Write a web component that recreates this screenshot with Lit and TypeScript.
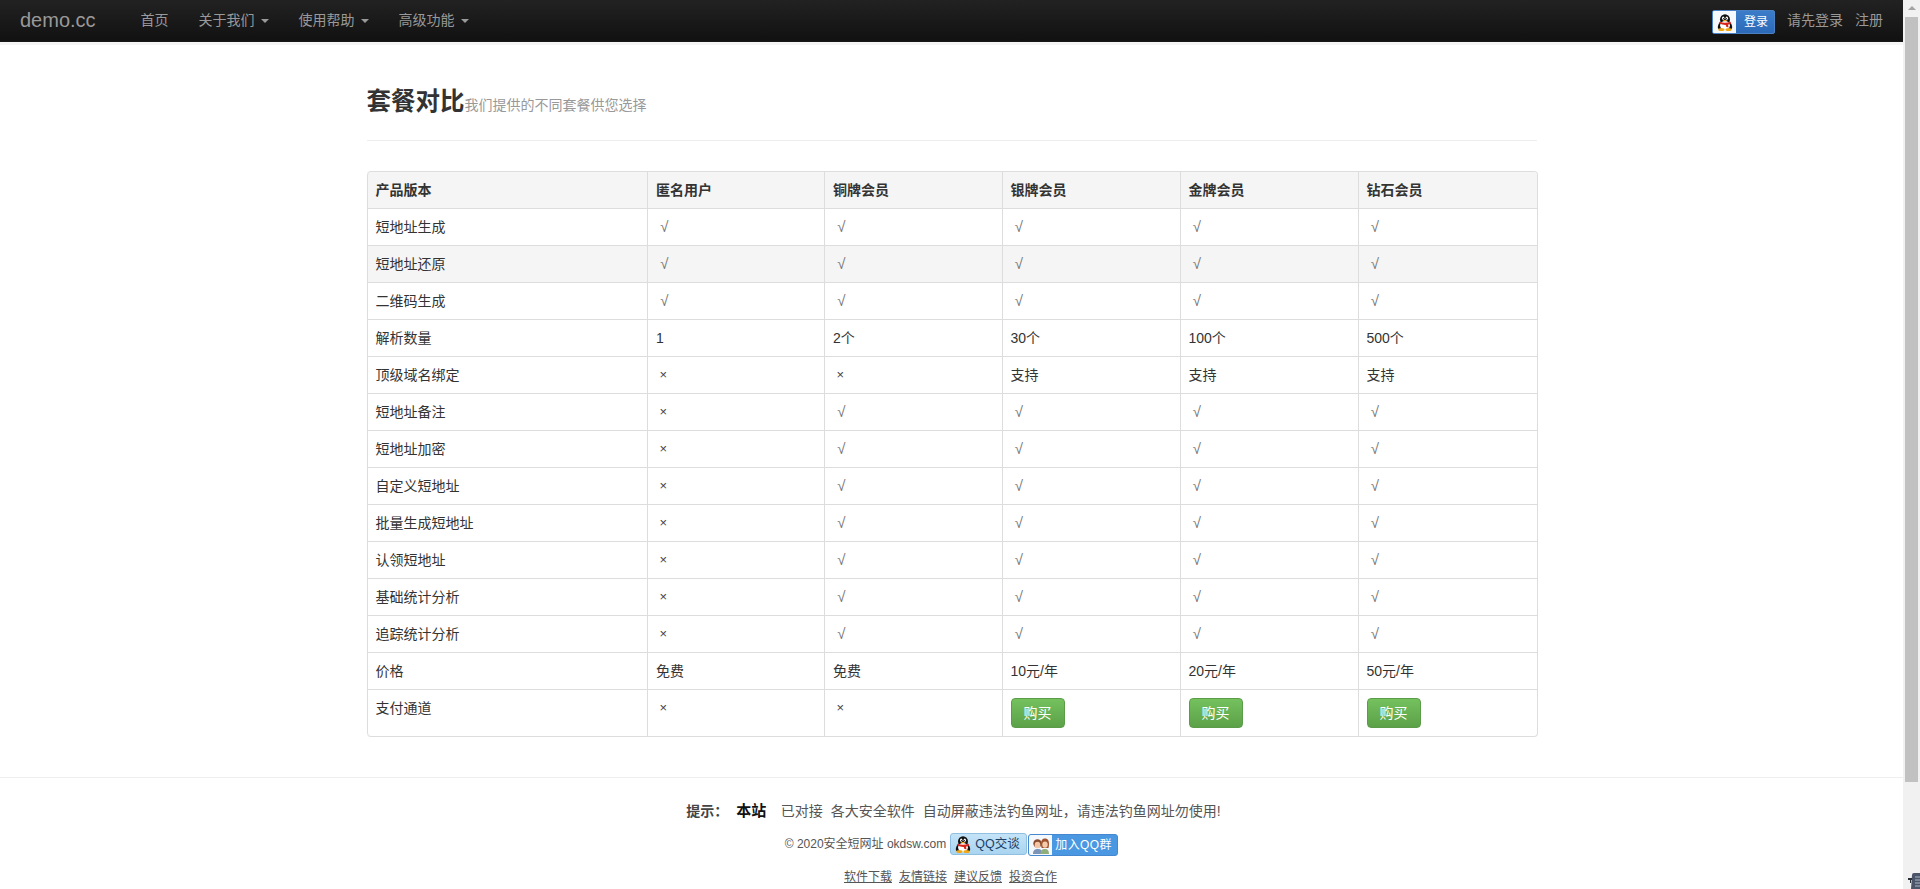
import { LitElement, html, css, svg } from "lit";
import { customElement } from "lit/decorators.js";

const Y = "\u00a0√";
const N = "\u00a0×";
const rows: { cells: string[]; stripe?: boolean }[] = [
  { cells: ["短地址生成", Y, Y, Y, Y, Y] },
  { cells: ["短地址还原", Y, Y, Y, Y, Y], stripe: true },
  { cells: ["二维码生成", Y, Y, Y, Y, Y] },
  { cells: ["解析数量", "1", "2个", "30个", "100个", "500个"] },
  { cells: ["顶级域名绑定", N, N, "支持", "支持", "支持"] },
  { cells: ["短地址备注", N, Y, Y, Y, Y] },
  { cells: ["短地址加密", N, Y, Y, Y, Y] },
  { cells: ["自定义短地址", N, Y, Y, Y, Y] },
  { cells: ["批量生成短地址", N, Y, Y, Y, Y] },
  { cells: ["认领短地址", N, Y, Y, Y, Y] },
  { cells: ["基础统计分析", N, Y, Y, Y, Y] },
  { cells: ["追踪统计分析", N, Y, Y, Y, Y] },
  { cells: ["价格", "免费", "免费", "10元/年", "20元/年", "50元/年"] },
];
const heads = ["产品版本", "匿名用户", "铜牌会员", "银牌会员", "金牌会员", "钻石会员"];
const widths = [280.5, 177, 177.5, 178, 178, 179];

const penguin = (w: number, h: number) => svg`<svg class="peng" width=${w} height=${h} viewBox="0 0 16 17">
  <ellipse cx="8" cy="5.6" rx="5" ry="5.4" fill="#111"/>
  <path d="M3 8 C0.8 10.5 0.2 13.5 1.4 15 L14.6 15 C15.8 13.5 15.2 10.5 13 8 Z" fill="#111"/>
  <ellipse cx="8" cy="11.6" rx="4.9" ry="4.6" fill="#fff"/>
  <ellipse cx="6.2" cy="4.2" rx="1.2" ry="1.6" fill="#fff"/>
  <ellipse cx="9.8" cy="4.2" rx="1.2" ry="1.6" fill="#fff"/>
  <circle cx="6.5" cy="4.5" r=".6" fill="#111"/><circle cx="9.5" cy="4.5" r=".6" fill="#111"/>
  <path d="M5.4 6 H10.6 L8 7.6 Z" fill="#f0a818"/>
  <path d="M2.6 7.8 C6 9.2 10 9.2 13.4 7.8 L14 9.6 C12.6 10.4 11.8 10.6 11 10.7 L11.6 13.6 L9.2 12.8 L8.8 10.9 C7 11 4.6 10.7 2.2 9.6 Z" fill="#d8261c"/>
  <ellipse cx="4.4" cy="15.4" rx="3.1" ry="1.5" fill="#f0a818"/>
  <ellipse cx="11.6" cy="15.4" rx="3.1" ry="1.5" fill="#f0a818"/>
</svg>`;

const people = svg`<svg width="18" height="19" viewBox="0 0 18 19">
  <path d="M1 18 C1 14 3 13 6 13 C9 13 10.5 14.5 10.5 18 Z" fill="#7c93b8"/>
  <path d="M8.5 18 C8.5 14 10.5 13 13 13 C15.6 13 17 14.5 17 18 Z" fill="#8fae7c"/>
  <circle cx="5.5" cy="7.5" r="4.2" fill="#8a4a2c"/>
  <ellipse cx="5.5" cy="9" rx="2.8" ry="3.2" fill="#f2c6a4"/>
  <path d="M13 2.5 C9.8 2.5 9 5 9 8 C9 10.5 9.6 12 9.6 12 H16.4 C16.4 12 17 10.5 17 8 C17 5 16.2 2.5 13 2.5 Z" fill="#a0522d"/>
  <ellipse cx="13" cy="8.6" rx="2.7" ry="3.2" fill="#f4ccaa"/>
</svg>`;

@customElement("app-root")
export class AppRoot extends LitElement {
  static styles = css`
    :host {
      display: flex;
      height: 100vh;
      overflow: hidden;
      position: relative;
      font: 14px/20px "Liberation Sans", "Noto Sans CJK SC", sans-serif;
      color: #333;
      background: #fff;
    }
    .page { flex: 1; min-width: 0; }
    a { color: inherit; text-decoration: none; }

    .navbar {
      height: 42px;
      box-sizing: border-box;
      display: flex;
      align-items: flex-start;
      background: linear-gradient(#222, #111);
      border-bottom: 1px solid #181818;
      box-shadow: 0 3px 0 #f5f5f5;
      color: #999;
      padding-right: 20px;
    }
    .brand { font-size: 20px; line-height: 20px; padding: 10px 30px 10px 20px; width: 75.5px; }
    .nav { display: flex; }
    .nav a { display: block; padding: 10px 15px; }
    .caret {
      display: inline-block;
      width: 0;
      height: 0;
      margin-left: 6px;
      vertical-align: 2px;
      border-top: 4px solid #999;
      border-left: 4px solid transparent;
      border-right: 4px solid transparent;
    }
    .spacer { flex: 1; }
    .qq-login {
      display: flex;
      margin-top: 10px;
      width: 63px;
      height: 24px;
      box-sizing: border-box;
      border: 1px solid #4a80c4;
      border-radius: 2px;
      background: linear-gradient(#3b7cc9, #2c6ab8);
      color: #fff;
      font-size: 12px;
      line-height: 22px;
      overflow: hidden;
    }
    .qq-login .ico {
      width: 23px;
      background: #f4f7fb;
      display: flex;
      align-items: center;
      justify-content: center;
      flex: none;
    }
    .qq-login .txt { padding-left: 8px; }
    .right { display: flex; gap: 12px; margin-left: 12px; padding-top: 10px; }

    .container { width: 1170px; margin: 0 auto; }
    .header {
      margin: 40px 0 30px;
      padding-bottom: 18px;
      border-bottom: 1px solid #eee;
    }
    .header h3 { margin: 0; height: 40px; font-size: 24.5px; line-height: 40px; font-weight: bold; color: #333; }
    .header small { font-size: 14px; font-weight: normal; color: #999; }

    table {
      width: 1170px;
      table-layout: fixed;
      border-collapse: separate;
      border-spacing: 0;
      border: 1px solid #ddd;
      border-left-width: 0;
      border-radius: 4px;
      box-sizing: border-box;
    }
    th, td {
      text-align: left;
      padding: 8px;
      border-left: 1px solid #ddd;
      border-top: 1px solid #ddd;
      vertical-align: top;
    }
    th { background: #f5f5f5; font-weight: bold; border-top: 0; }
    th:first-child { border-top-left-radius: 4px; }
    th:last-child { border-top-right-radius: 4px; }
    tr:last-child td:first-child { border-bottom-left-radius: 4px; }
    tr.stripe td { background: #f5f5f5; }
    td.yes { color: #777; font-size: 15px; }
    td.no { color: #444; font-size: 13px; }
    .btn {
      display: inline-block;
      box-sizing: border-box;
      width: 54px;
      height: 30px;
      padding: 4px 0;
      text-align: center;
      border: 1px solid #5b9c49;
      border-radius: 4px;
      background: linear-gradient(#74c15e, #5ca148);
      color: #fff;
    }

    footer {
      margin-top: 40px;
      border-top: 1px solid #eee;
      padding-top: 23px;
      display: flex;
      flex-direction: column;
      align-items: center;
      gap: 12px;
      color: #555;
    }
    .tip { display: flex; padding-left: 12px; }
    .tip b { color: #444; margin-right: 8px; }
    .tip strong { color: #111; font-size: 15px; margin-right: 14.5px; }
    .tip span { margin-right: 8px; }
    .copy { display: flex; align-items: center; font-size: 12px; height: 22px; }
    .copy .c { margin-right: 4px; }
    .talk {
      display: flex;
      align-items: center;
      box-sizing: border-box;
      width: 77px;
      height: 22px;
      padding-left: 4px;
      gap: 4px;
      font-size: 12.5px;
      border: 1px solid #8fc0e2;
      border-radius: 3px;
      background: linear-gradient(#c4e3f7, #a9d4f0);
      color: #1d3f66;
    }
    .group {
      display: flex;
      box-sizing: border-box;
      width: 90px;
      height: 22px;
      margin: 2px 0 0 1px;
      border: 1px solid #4588cf;
      border-radius: 3px;
      background: #4a98e2;
      color: #fff;
      line-height: 20px;
      overflow: hidden;
    }
    .group .ico { width: 23px; background: #f4f7fb; display: flex; align-items: center; justify-content: center; flex: none; }
    .group .txt { padding-left: 3px; letter-spacing: .4px; white-space: nowrap; }
    .links { display: flex; gap: 7px; font-size: 12px; margin-left: -2px; }
    .links a { text-decoration: underline; }

    .scrollbar { width: 17px; flex: none; background: #f1f1f1; display: flex; flex-direction: column; align-items: center; }
    .arrow {
      height: 17px;
      box-sizing: border-box;
      padding-top: 6px;
    }
    .arrow i {
      display: block;
      width: 0;
      height: 0;
      border-left: 4px solid transparent;
      border-right: 4px solid transparent;
      border-bottom: 4px solid #a3a3a3;
    }
    .thumb { width: 13px; height: 765px; background: #c1c1c1; }

    .widget { position: absolute; right: 0; bottom: 0; line-height: 0; }
  `;

  private cellClass(c: string) {
    return c === Y ? "yes" : c === N ? "no" : "";
  }

  render() {
    return html`
      <div class="page">
        <div class="navbar">
          <a class="brand" href="#">demo.cc</a>
          <div class="nav">
            <a href="#">首页</a>
            <a href="#">关于我们<i class="caret"></i></a>
            <a href="#">使用帮助<i class="caret"></i></a>
            <a href="#">高级功能<i class="caret"></i></a>
          </div>
          <div class="spacer"></div>
          <a class="qq-login" href="#"><span class="ico">${penguin(16, 17)}</span><span class="txt">登录</span></a>
          <div class="right"><a href="#">请先登录</a><a href="#">注册</a></div>
        </div>

        <div class="container">
          <div class="header">
            <h3>套餐对比<small>我们提供的不同套餐供您选择</small></h3>
          </div>
          <table>
            <colgroup>${widths.map((w) => html`<col style="width:${w}px" />`)}</colgroup>
            <tr>${heads.map((h) => html`<th>${h}</th>`)}</tr>
            ${rows.map(
              (r) => html`<tr class=${r.stripe ? "stripe" : ""}>${r.cells.map(
                (c) => html`<td class=${this.cellClass(c)}>${c}</td>`
              )}</tr>`
            )}
            <tr>
              <td>支付通道</td><td class="no">${N}</td><td class="no">${N}</td>
              <td><a class="btn" href="#">购买</a></td>
              <td><a class="btn" href="#">购买</a></td>
              <td><a class="btn" href="#">购买</a></td>
            </tr>
          </table>
        </div>

        <footer>
          <div class="tip">
            <b>提示：</b><strong>本站</strong><span>已对接</span><span>各大安全软件</span><span>自动屏蔽违法钓鱼网址，请违法钓鱼网址勿使用!</span>
          </div>
          <div class="copy">
            <span class="c">© 2020安全短网址 okdsw.com</span>
            <a class="talk" href="#">${penguin(16, 17)}<span>QQ交谈</span></a>
            <a class="group" href="#"><span class="ico">${people}</span><span class="txt">加入QQ群</span></a>
          </div>
          <div class="links">
            <a href="#">软件下载</a><a href="#">友情链接</a><a href="#">建议反馈</a><a href="#">投资合作</a>
          </div>
        </footer>
      </div>
      <div class="scrollbar">
        <div class="arrow"><i></i></div>
        <div class="thumb"></div>
      </div>
      <div class="widget">
        <svg width="12" height="16" viewBox="0 0 12 16">
          <path d="M4 2 Q4 0 6 0 H12 V16 H3 Z" fill="#4b5569"/>
          <path d="M0 5 H4 V7 H3 V10 H2 V7 H0 Z" fill="#2b3038"/>
          <path d="M7 4 H12 M7 7 H12 M7 10 H12 M7 13 H12" stroke="#aeb6c4" stroke-width="1"/>
        </svg>
      </div>
    `;
  }
}
